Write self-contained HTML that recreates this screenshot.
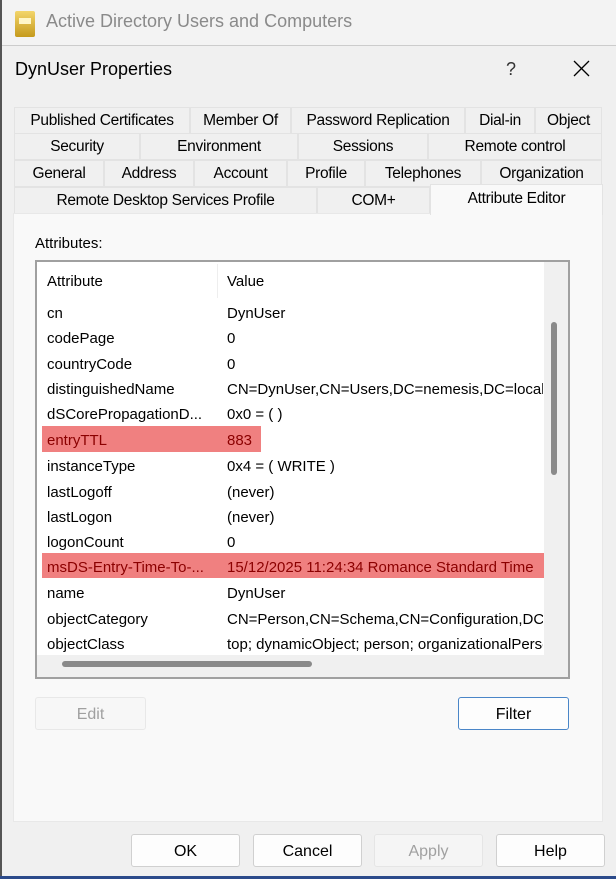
<!DOCTYPE html>
<html><head><style>
*{margin:0;padding:0;box-sizing:border-box}
body{width:616px;height:879px;background:#f0f0f0;font-family:"Liberation Sans",sans-serif;font-size:15px;color:#000;position:relative;overflow:hidden}
.a{position:absolute}
.tab{position:absolute;height:27px;border:1px solid #e3e3e3;background:#f0f0f0;text-align:center;line-height:26px;font-size:15.5px;letter-spacing:-0.3px}
.row{position:absolute;left:47px;font-size:15px;height:25px;line-height:27px;white-space:nowrap}
.v{position:absolute;left:227px;font-size:15px;line-height:27px;white-space:nowrap;width:316px;overflow:hidden}
.btn{position:absolute;height:33px;border:1px solid #d0d0d0;background:#fdfdfd;text-align:center;line-height:33px;font-size:16px;border-radius:3px}
</style></head><body>
<div class="a" style="left:0;top:0;width:2px;height:879px;background:#555"></div>
<div class="a" style="left:2px;top:0;width:614px;height:46px;background:#f3f3f3;border-bottom:1px solid #ccc"></div>
<div class="a" style="left:15px;top:11px;width:20px;height:26px;background:linear-gradient(#f3d56a,#c59a1c);border-radius:2px"><div style="margin:7px 4px;height:6px;background:#fff6c8"></div></div>
<div class="a" style="left:46px;top:11px;font-size:18px;color:#8a8a8a">Active Directory Users and Computers</div>
<div class="a" style="left:15px;top:59px;font-size:18px">DynUser Properties</div>
<div class="a" style="left:506px;top:59px;font-size:18px;color:#333">?</div>
<svg class="a" style="left:573px;top:60px" width="17" height="17"><path d="M1 1L16 16M16 1L1 16" stroke="#000" stroke-width="1.3"/></svg>

<div class="tab" style="left:14px;top:107px;width:176px">Published Certificates</div>
<div class="tab" style="left:190px;top:107px;width:101px">Member Of</div>
<div class="tab" style="left:291px;top:107px;width:174px">Password Replication</div>
<div class="tab" style="left:465px;top:107px;width:70px">Dial-in</div>
<div class="tab" style="left:535px;top:107px;width:67px">Object</div>
<div class="tab" style="left:14px;top:133px;width:126px">Security</div>
<div class="tab" style="left:140px;top:133px;width:158px">Environment</div>
<div class="tab" style="left:298px;top:133px;width:130px">Sessions</div>
<div class="tab" style="left:428px;top:133px;width:174px">Remote control</div>
<div class="tab" style="left:14px;top:160px;width:90px">General</div>
<div class="tab" style="left:104px;top:160px;width:90px">Address</div>
<div class="tab" style="left:194px;top:160px;width:93px">Account</div>
<div class="tab" style="left:287px;top:160px;width:78px">Profile</div>
<div class="tab" style="left:365px;top:160px;width:116px">Telephones</div>
<div class="tab" style="left:481px;top:160px;width:121px">Organization</div>
<div class="tab" style="left:14px;top:187px;width:303px">Remote Desktop Services Profile</div>
<div class="tab" style="left:317px;top:187px;width:113px">COM+</div>
<div class="a" style="left:13px;top:213px;width:590px;height:609px;background:#f9f9f9;border:1px solid #e8e8e8"></div>
<div class="tab" style="left:430px;top:184px;width:173px;height:31px;background:#f9f9f9;border-bottom:none;line-height:27px">Attribute Editor</div>

<div class="a" style="left:35px;top:235px;font-size:15px">Attributes:</div>
<div class="a" style="left:35px;top:260px;width:535px;height:419px;background:#fff;border:2px solid #a0a0a0"></div>
<div class="a" style="left:217px;top:264px;width:1px;height:34px;background:#eee"></div>
<div class="row" style="top:268px">Attribute</div><div class="v" style="top:268px">Value</div>
<div class="a" style="left:42px;top:426px;width:219px;height:26px;background:#f08080"></div>
<div class="a" style="left:42px;top:553px;width:502px;height:25px;background:#f08080"></div>
<div class="row" style="top:300px">cn</div><div class="v" style="top:300px">DynUser</div>
<div class="row" style="top:325px">codePage</div><div class="v" style="top:325px">0</div>
<div class="row" style="top:351px">countryCode</div><div class="v" style="top:351px">0</div>
<div class="row" style="top:376px">distinguishedName</div><div class="v" style="top:376px">CN=DynUser,CN=Users,DC=nemesis,DC=local</div>
<div class="row" style="top:401px">dSCorePropagationD...</div><div class="v" style="top:401px">0x0 = (  )</div>
<div class="row" style="top:427px;color:#8b0000">entryTTL</div><div class="v" style="top:427px;color:#8b0000">883</div>
<div class="row" style="top:453px">instanceType</div><div class="v" style="top:453px">0x4 = ( WRITE )</div>
<div class="row" style="top:479px">lastLogoff</div><div class="v" style="top:479px">(never)</div>
<div class="row" style="top:504px">lastLogon</div><div class="v" style="top:504px">(never)</div>
<div class="row" style="top:529px">logonCount</div><div class="v" style="top:529px">0</div>
<div class="row" style="top:554px;color:#8b0000">msDS-Entry-Time-To-...</div><div class="v" style="top:554px;color:#8b0000">15/12/2025 11:24:34 Romance Standard Time</div>
<div class="row" style="top:580px">name</div><div class="v" style="top:580px">DynUser</div>
<div class="row" style="top:606px">objectCategory</div><div class="v" style="top:606px">CN=Person,CN=Schema,CN=Configuration,DC</div>
<div class="row" style="top:631px">objectClass</div><div class="v" style="top:631px">top; dynamicObject; person; organizationalPerson</div>
<div class="a" style="left:544px;top:262px;width:24px;height:393px;background:#f0f0f0"></div>
<div class="a" style="left:551px;top:322px;width:6px;height:153px;background:#8a8a8a;border-radius:3px"></div>
<div class="a" style="left:37px;top:655px;width:531px;height:22px;background:#f0f0f0"></div>
<div class="a" style="left:62px;top:661px;width:250px;height:6px;background:#8a8a8a;border-radius:3px"></div>

<div class="btn" style="left:35px;top:697px;width:111px;color:#a0a0a0;border-color:#e8e8e8;background:#f7f7f7">Edit</div>
<div class="btn" style="left:458px;top:697px;width:111px;border-color:#4a86c8">Filter</div>

<div class="btn" style="left:131px;top:834px;width:109px">OK</div>
<div class="btn" style="left:253px;top:834px;width:109px">Cancel</div>
<div class="btn" style="left:374px;top:834px;width:109px;color:#a0a0a0;background:#f5f5f5;border-color:#e5e5e5">Apply</div>
<div class="btn" style="left:496px;top:834px;width:109px">Help</div>
<div class="a" style="left:0;top:876px;width:616px;height:3px;background:#2b4a8a"></div>
</body></html>
